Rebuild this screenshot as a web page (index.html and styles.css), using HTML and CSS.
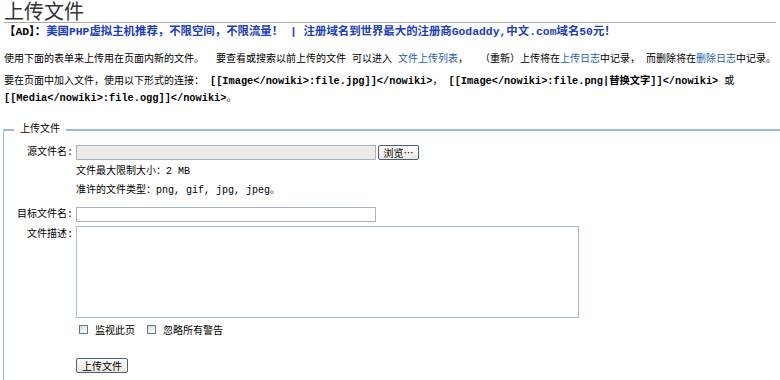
FILE: index.html
```html
<!DOCTYPE html>
<html lang="zh-CN">
  <head>
    <meta charset="UTF-8" />
    <title>上传文件</title>
    <link rel="stylesheet" href="styles.css">
  </head>
  <body>
    <div class="page">
      <h1 class="title">上传文件</h1>
      <p class="ad"><span class="ad-tag">【AD】：</span><a href="#">美国PHP虚拟主机推荐，不限空间，不限流量！</a> |&nbsp;<a href="#">注册域名到世界最大的注册商Godaddy,中文.com域名50元！</a></p>
      <p class="intro">使用下面的表单来上传用在页面内新的文件。&nbsp; 要查看或搜索以前上传的文件 可以进入 <a href="#">文件上传列表</a>，&nbsp; （重新）上传将在<a href="#">上传日志</a>中记录， 而删除将在<a href="#">删除日志</a>中记录。</p>
      <p class="usage">要在页面中加入文件，使用以下形式的连接： <code>[[Image&lt;/nowiki&gt;:file.jpg]]&lt;/nowiki&gt;</code>， <code>[[Image&lt;/nowiki&gt;:file.png|替换文字]]&lt;/nowiki&gt;</code> 或 <code>[[Media&lt;/nowiki&gt;:file.ogg]]&lt;/nowiki&gt;</code>。</p>

      <fieldset class="upload">
        <legend>上传文件</legend>
        <div class="row row-source">
          <label for="src">源文件名:</label>
          <input type="text" id="src" class="field field-file" readonly />
          <button class="btn btn-browse">浏览…</button>
        </div>
        <div class="help first">文件最大限制大小：2 MB</div>
        <div class="help">准许的文件类型：png, gif, jpg, jpeg。</div>
        <div class="row row-dest">
          <label for="dest">目标文件名:</label>
          <input type="text" id="dest" class="field" />
        </div>
        <div class="row row-desc">
          <label for="desc">文件描述:</label>
          <textarea id="desc" class="field field-area"></textarea>
        </div>
        <div class="checks">
          <label class="check"><input type="checkbox" />监视此页</label>
          <label class="check"><input type="checkbox" />忽略所有警告</label>
        </div>
        <div class="submit">
          <button class="btn btn-submit">上传文件</button>
        </div>
      </fieldset>
    </div>
  </body>
</html>
```

FILE: styles.css
```css
html {
  overflow-x: hidden;
}
body {
  margin: 0;
  padding: 0;
  background-color: #fff;
  color: #000;
  font-family: "Liberation Mono", "Noto Sans CJK SC", monospace;
  font-size: 10px;
}
a {
  color: #2a5db0;
  text-decoration: none;
}
.page {
  padding: 0 4px;
}
.title {
  margin: 0;
  font-family: "Noto Sans CJK SC", sans-serif;
  font-size: 20px;
  font-weight: normal;
  line-height: 22px;
  color: #333;
  border-bottom: 1px solid #aaa;
}
p {
  margin: 0;
  line-height: 17px;
}
.ad {
  margin-top: 1px;
  font-size: 11.4px;
  font-weight: bold;
  color: #1a3dc1;
  white-space: nowrap;
}
.ad a {
  color: #1a3dc1;
}
.ad-tag {
  color: #000;
}
.intro {
  margin-top: 10px;
  white-space: nowrap;
}
.usage {
  margin-top: 5px;
}
code {
  font-family: "Liberation Mono", "Noto Sans CJK SC", monospace;
  font-size: 10.3px;
  font-weight: bold;
}

/* upload form */
.upload {
  margin: 14px -12px 0 -1px;
  padding: 0 0 20px 0;
  border: 1px solid #9fbad6;
  border-top-width: 2px;
}
.upload legend {
  margin-left: 10px;
  padding: 0 6px;
  line-height: 17px;
}
.row {
  display: flex;
  align-items: center;
}
.row > label {
  flex: none;
  width: 69px;
  margin-right: 3px;
  text-align: right;
  white-space: nowrap;
}
.row-source {
  margin-top: 7px;
  line-height: 15px;
}
.help {
  padding-left: 72px;
  line-height: 19px;
}
.help.first {
  margin-top: 2px;
}
.row-dest {
  margin-top: 7px;
  line-height: 15px;
}
.row-desc {
  margin-top: 4px;
  align-items: flex-start;
  line-height: 17px;
}
.field {
  box-sizing: border-box;
  width: 300px;
  height: 15px;
  margin: 0;
  padding: 0 2px;
  border: 1px solid #a5b4c4;
  background-color: #fff;
  font-size: 10px;
}
.field-file {
  background-color: #ecebe6;
}
.field-area {
  display: block;
  width: 503px;
  height: 92px;
  resize: none;
  border-color: #a9bcd0;
}
.btn {
  box-sizing: border-box;
  height: 15px;
  margin: 0;
  padding: 0;
  border: 1px solid #4a5f7e;
  border-radius: 2px;
  background: linear-gradient(#ffffff, #e8e6dc);
  color: #000;
  font-family: "Noto Sans CJK SC", sans-serif;
  font-size: 10px;
  line-height: 13px;
  white-space: nowrap;
  cursor: pointer;
}
.btn-browse {
  width: 41px;
  margin-left: 2px;
}
.checks {
  display: flex;
  align-items: center;
  margin-top: 3px;
  padding-left: 75px;
  line-height: 17px;
}
.check {
  display: flex;
  align-items: center;
  margin-right: 12px;
  font-family: "Noto Sans CJK SC", sans-serif;
}
.check input {
  appearance: none;
  box-sizing: border-box;
  width: 9px;
  height: 9px;
  margin: 0 7px 0 0;
  border: 1px solid #5a7aa0;
  background: linear-gradient(135deg, #d8d8d2, #ffffff);
}
.submit {
  margin-top: 20px;
  padding-left: 72px;
}
.btn-submit {
  display: block;
  width: 52px;
  height: 15px;
}
```
